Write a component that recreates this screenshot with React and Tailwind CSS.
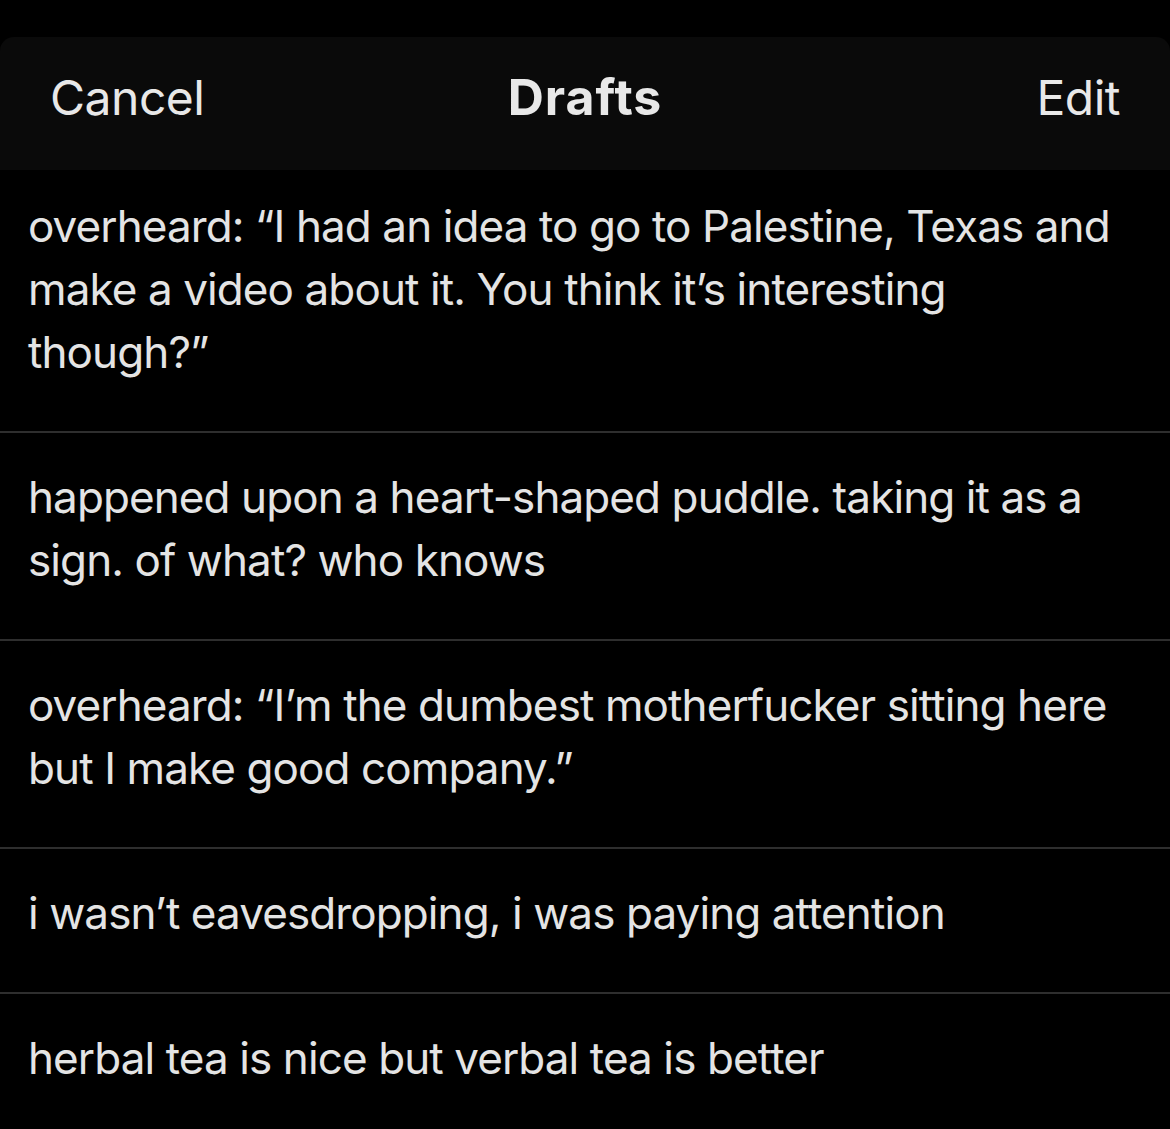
export default function App() {
  const drafts = [
    "overheard: “I had an idea to go to Palestine, Texas and make a video about it. You think it’s interesting though?”",
    "happened upon a heart-shaped puddle. taking it as a sign. of what? who knows",
    "overheard: “I’m the dumbest motherfucker sitting here but I make good company.”",
    "i wasn’t eavesdropping, i was paying attention",
    "herbal tea is nice but verbal tea is better",
  ];
  return (
    <div className="w-[1170px] h-[1129px] overflow-hidden bg-black" style={{ fontFamily: "Inter, 'Noto Sans', sans-serif" }}>
      <div className="h-[37px] bg-black" />
      <div className="h-[133px] bg-[#0a0a0a] rounded-t-[14px] flex items-center justify-between px-[50px] pb-[12px] relative text-[#e8e8e8] text-[48px] tracking-[-0.5px]">
        <span>Cancel</span>
        <span className="absolute left-0 right-0 top-0 bottom-[12px] flex items-center justify-center font-bold text-[50px] tracking-[1px] pointer-events-none">Drafts</span>
        <span>Edit</span>
      </div>
      <div className="flex flex-col">
        {drafts.map((d, i) => (
          <div
            key={i}
            className={
              "pl-[28px] pr-[40px] text-[44px] leading-[63px] text-[#e4e4e4] tracking-[-0.9px] " +
              (i === 0 ? "pt-[25px] pb-[47px]" : "pt-[33px] pb-[47px] border-t-2 border-[#2e2e2e]")
            }
          >
            {d}
          </div>
        ))}
      </div>
    </div>
  );
}
